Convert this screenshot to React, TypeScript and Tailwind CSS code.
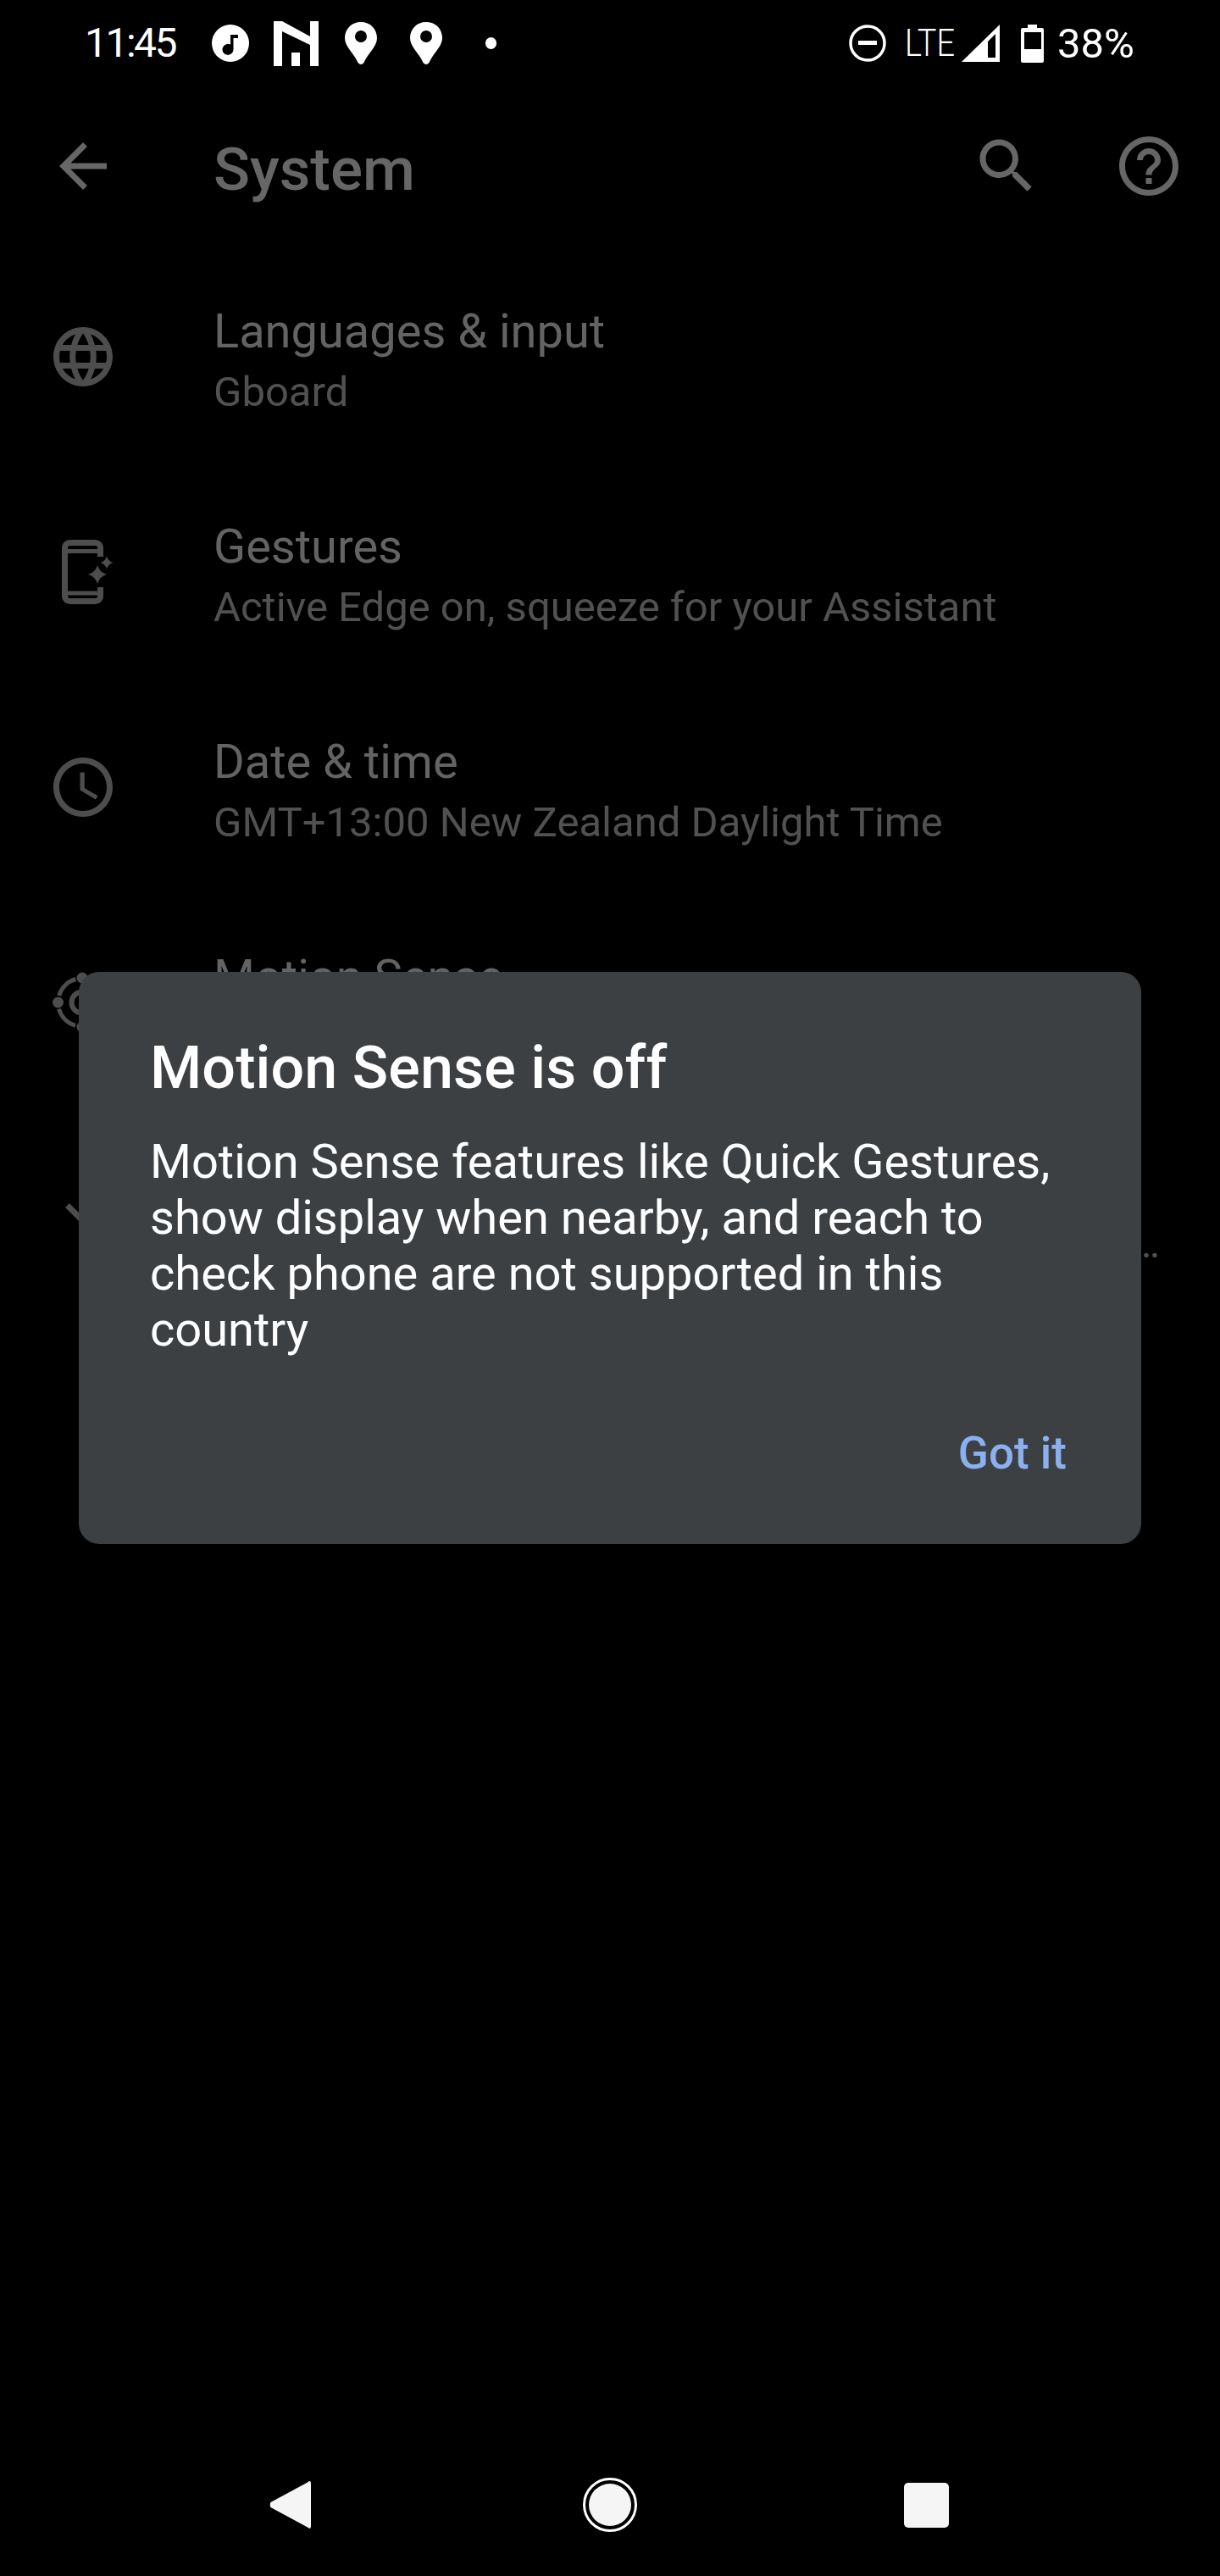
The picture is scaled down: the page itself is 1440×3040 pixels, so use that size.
import React from "react";

const Mat = ({ d, className }: { d: string; className?: string }) => (
  <svg width="84" height="84" viewBox="0 0 24 24" fill="currentColor" className={className}>
    <path d={d} />
  </svg>
);

const BACK = "M20 11H7.83l5.59-5.59L12 4l-8 8 8 8 1.41-1.41L7.83 13H20v-2z";
const SEARCH = "M15.5 14h-.79l-.28-.27C15.41 12.59 16 11.11 16 9.5 16 5.91 13.09 3 9.5 3S3 5.91 3 9.5 5.91 16 9.5 16c1.61 0 3.09-.59 4.23-1.57l.27.28v.79l5 4.99L20.49 19l-4.99-5zm-6 0C7.01 14 5 11.99 5 9.5S7.01 5 9.5 5 14 7.01 14 9.5 11.99 14 9.5 14z";
const HELP = "M11 18h2v-2h-2v2zm1-16C6.48 2 2 6.48 2 12s4.48 10 10 10 10-4.48 10-10S17.52 2 12 2zm0 18c-4.41 0-8-3.59-8-8s3.59-8 8-8 8 3.59 8 8-3.59 8-8 8zm0-14c-2.21 0-4 1.79-4 4h2c0-1.1.9-2 2-2s2 .9 2 2c0 2-3 1.75-3 5h2c0-2.25 3-2.5 3-5 0-2.21-1.79-4-4-4z";
const GLOBE = "M11.99 2C6.47 2 2 6.48 2 12s4.47 10 9.99 10C17.52 22 22 17.52 22 12S17.52 2 11.99 2zm6.93 6h-2.95c-.32-1.25-.78-2.45-1.38-3.56 1.84.63 3.37 1.91 4.33 3.56zM12 4.04c.83 1.2 1.48 2.53 1.91 3.96h-3.82c.43-1.43 1.08-2.76 1.91-3.96zM4.26 14C4.1 13.36 4 12.69 4 12s.1-1.36.26-2h3.38c-.08.66-.14 1.32-.14 2 0 .68.06 1.34.14 2H4.26zm.82 2h2.95c.32 1.25.78 2.45 1.38 3.56-1.84-.63-3.37-1.9-4.33-3.56zm2.95-8H5.08c.96-1.66 2.49-2.93 4.33-3.56C8.81 5.55 8.35 6.75 8.03 8zM12 19.96c-.83-1.2-1.48-2.53-1.91-3.96h3.82c-.43 1.43-1.08 2.76-1.91 3.96zM14.34 14H9.66c-.09-.66-.16-1.32-.16-2 0-.68.07-1.35.16-2h4.68c.09.65.16 1.32.16 2 0 .68-.07 1.34-.16 2zm.25 5.56c.6-1.11 1.06-2.31 1.38-3.56h2.95c-.96 1.65-2.49 2.93-4.33 3.56zM16.36 14c.08-.66.14-1.32.14-2 0-.68-.06-1.34-.14-2h3.38c.16.64.26 1.31.26 2s-.1 1.36-.26 2h-3.38z";
const CLOCK = "M11.99 2C6.47 2 2 6.48 2 12s4.47 10 9.99 10C17.52 22 22 17.52 22 12S17.52 2 11.99 2zM12 20c-4.42 0-8-3.58-8-8s3.58-8 8-8 8 3.58 8 8-3.58 8-8 8zm.5-13H11v6l5.25 3.15.75-1.23-4.5-2.67z";
const CHEVRON = "M16.59 8.59L12 13.17 7.41 8.59 6 10l6 6 6-6z";

const star = (c: number, m: number, r: number) =>
  `M${c} ${m - r}Q${c + r * 0.22} ${m - r * 0.22} ${c + r} ${m}Q${c + r * 0.22} ${m + r * 0.22} ${c} ${m + r}Q${c - r * 0.22} ${m + r * 0.22} ${c - r} ${m}Q${c - r * 0.22} ${m - r * 0.22} ${c} ${m - r}Z`;

const GesturesIcon = () => (
  <svg width="84" height="84" viewBox="0 0 84 84" fill="none" stroke="currentColor">
    <path strokeWidth="7" d="M62.5 24V13.5a6 6 0 0 0-6-6H26.5a6 6 0 0 0-6 6V70.5a6 6 0 0 0 6 6H56.5a6 6 0 0 0 6-6V60" />
    <path strokeWidth="5" d="M20 17.5H63M20 67H63" />
    <path fill="currentColor" stroke="none" d={star(59, 45, 11) + star(70, 31, 7.5)} />
  </svg>
);

const MotionIcon = () => (
  <svg width="84" height="84" viewBox="0 0 84 84" fill="none" stroke="currentColor">
    <circle cx="41" cy="42" r="12.5" strokeWidth="6" />
    <circle cx="41" cy="42" r="28.5" strokeWidth="5" strokeDasharray="28.8 16" strokeDashoffset="-8" />
    <circle cx="12.5" cy="42" r="6.5" fill="currentColor" stroke="none" />
    <circle cx="41" cy="13" r="6.5" fill="currentColor" stroke="none" />
    <circle cx="41" cy="71" r="6.5" fill="currentColor" stroke="none" />
  </svg>
);

const Pin = () => (
  <svg width="38" height="50" viewBox="0 0 38 50" fill="#fff">
    <path
      fillRule="evenodd"
      d="M19 0C8 0 0 8 0 19c0 10 11 18 15.500 29Q19 52 22.500 48C27 37 38 29 38 19 38 8 30 0 19 0ZM19 10a7 7 0 1 1 0 14 7 7 0 0 1 0-14Z"
    />
  </svg>
);

type Row = { title: string; sub: string; icon: React.ReactNode };

const rows: Row[] = [
  { title: "Languages & input", sub: "Gboard", icon: <Mat d={GLOBE} /> },
  { title: "Gestures", sub: "Active Edge on, squeeze for your Assistant", icon: <GesturesIcon /> },
  { title: "Date & time", sub: "GMT+13:00 New Zealand Daylight Time", icon: <Mat d={CLOCK} /> },
  { title: "Motion Sense", sub: "Off", icon: <MotionIcon /> },
];

export default function App() {
  return (
    <div className="relative flex h-[3040px] w-[1440px] flex-col overflow-hidden bg-black font-[Roboto,sans-serif] text-white">
      {/* status bar */}
      <div className="flex h-[102px] shrink-0 items-center pl-[100px]">
        <span className="w-[107px] whitespace-nowrap text-[48px] leading-none tracking-[-2.5px]">11:45</span>
        <svg width="44" height="44" viewBox="0 0 44 44" className="ml-[43px]" fill="#fff">
          <path fillRule="evenodd" d="M22 0a22 22 0 1 1 0 44 22 22 0 0 1 0-44ZM22 12V23.600a6.500 6.500 0 1 0 3.500 5.400V16H31V12Z" />
        </svg>
        <svg width="53" height="53" viewBox="0 0 53 53" className="ml-[29px]" fill="#fff">
          <polygon points="0,0 10,0 43,18 43,0 53,0 53,53 43,53 43,28 10,12 10,53 0,53" />
          <rect x="21" y="37" width="10" height="16" />
        </svg>
        <div className="ml-[31px]"><Pin /></div>
        <div className="ml-[39px]"><Pin /></div>
        <div className="ml-[51px] h-[14px] w-[13px] rounded-full bg-white" />
        <div className="ml-auto flex items-center pr-[99px]">
          <svg width="44" height="44" viewBox="0 0 44 44" fill="none" stroke="#fff">
            <circle cx="22" cy="22" r="20" strokeWidth="3.500" />
            <path d="M11 21.500H33" strokeWidth="5" />
          </svg>
          <span className="ml-[22px] w-[59px] origin-left scale-x-[0.86] whitespace-nowrap text-[44px] font-light leading-none">LTE</span>
          <svg width="45" height="44" viewBox="0 0 45 44" className="ml-[8px]" fill="#fff">
            <polygon points="0,44 45,0 45,44" />
            <polygon points="31,20 40,11 40,39 31,39" fill="#000" />
          </svg>
          <svg width="27" height="45" viewBox="0 0 27 45" className="ml-[25px]" fill="#fff">
            <path fillRule="evenodd" d="M8 0H19V4H25a2 2 0 0 1 2 2V43a2 2 0 0 1-2 2H2a2 2 0 0 1-2-2V6a2 2 0 0 1 2-2H8ZM4 9V29H24V9Z" />
          </svg>
          <span className="ml-[16px] w-[93px] whitespace-nowrap text-[49px] leading-none">38%</span>
        </div>
      </div>

      {/* app bar */}
      <div className="flex h-[188px] shrink-0 items-center text-[#666666]">
        <div className="flex w-[196px] justify-center"><Mat d={BACK} /></div>
        <span className="ml-[56px] pt-[6px] text-[71px] font-medium leading-none">System</span>
        <Mat d={SEARCH} className="ml-auto mr-[84px]" />
        <Mat d={HELP} className="mr-[42px]" />
      </div>

      {/* settings list */}
      <div className="flex flex-col pt-[4px]">
        {rows.map((r) => (
          <div key={r.title} className="flex h-[254px] items-center">
            <div className="flex w-[196px] justify-center text-[#4d4d4d]">{r.icon}</div>
            <div className="ml-[56px] h-full w-[1117px] pt-[61px]">
              <div className="text-[56px] leading-[72px] text-[#636363]">{r.title}</div>
              <div className="whitespace-nowrap text-[49px] leading-[71px] text-[#515151]">{r.sub}</div>
            </div>
          </div>
        ))}
        <div className="flex h-[254px] items-center">
          <div className="mb-[10px] flex w-[196px] justify-center text-[#4d4d4d]"><Mat d={CHEVRON} /></div>
          <div className="ml-[56px] h-full w-[1117px] pt-[50px]">
            <div className="text-[56px] leading-[72px] text-[#636363]">Advanced</div>
            <div className="whitespace-nowrap text-right text-[49px] leading-[72px] text-[#515151]">
              Backup, Reset options, Multiple users, Developer…
            </div>
          </div>
        </div>
      </div>

      {/* dialog */}
      <div className="absolute left-[93px] top-[1147px] flex h-[675px] w-[1254px] flex-col rounded-[24px] bg-[#3c4043] pl-[84px] pr-[88px] pt-[71px]">
        <div className="text-[70px] font-medium leading-[84px] tracking-[0.1px]">Motion Sense is off</div>
        <p className="mt-[36px] text-[56px] leading-[66px]">
          Motion Sense features like Quick Gestures, show display when nearby, and reach to check phone are not supported in this country
        </p>
        <div className="mt-[83px] flex justify-end">
          <span className="text-[53px] font-medium leading-[60px] text-[#8ab0f0]">Got it</span>
        </div>
      </div>

      {/* navigation bar */}
      <div className="mt-auto flex h-[168px] shrink-0 items-center pl-[318px]">
        <svg width="49" height="56" viewBox="0 0 49 56" fill="#f5f5f5">
          <path d="M45 1.500Q49 -2 49 3V53Q49 58 45 54.500L1.500 31Q0 28 1.500 25Z" />
        </svg>
        <svg width="64" height="64" viewBox="0 0 64 64" className="ml-[321px]">
          <circle cx="32" cy="32" r="30.500" fill="none" stroke="#fff" strokeWidth="3" />
          <circle cx="32" cy="32" r="25" fill="#f5f5f5" />
        </svg>
        <div className="ml-[315px] h-[53px] w-[53px] rounded-[5px] bg-[#f5f5f5]" />
      </div>
    </div>
  );
}
